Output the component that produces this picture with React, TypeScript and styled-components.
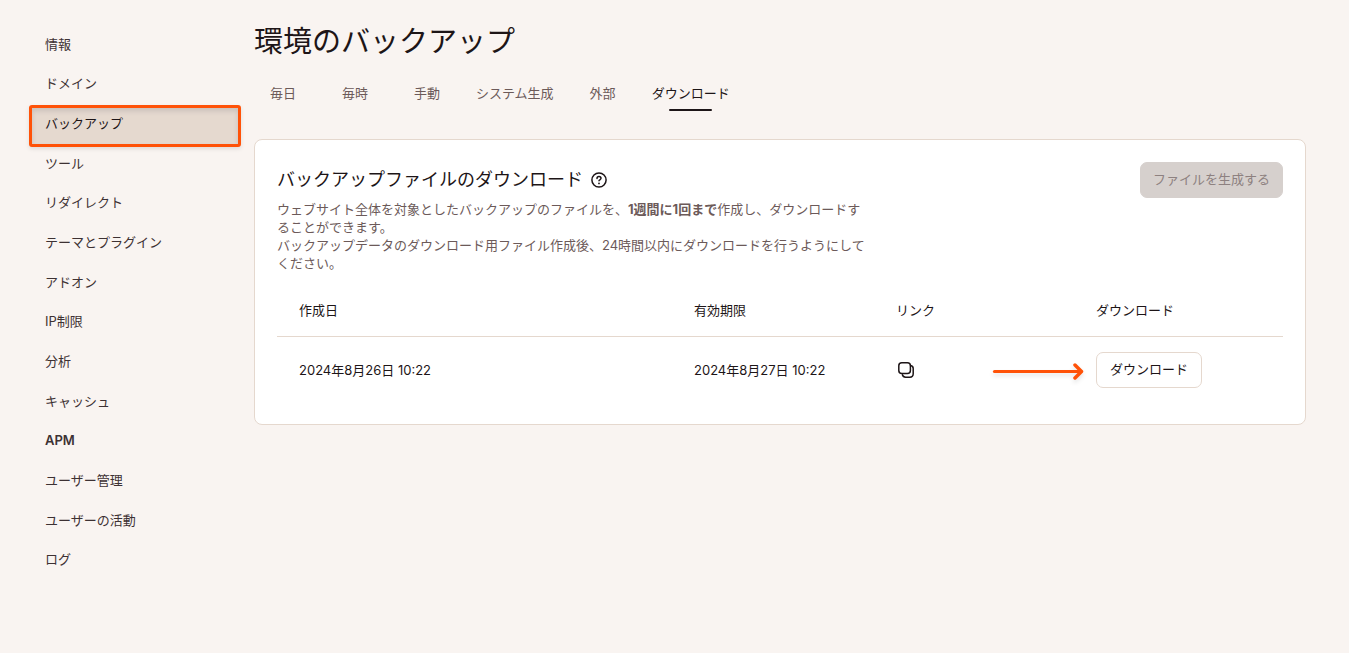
import React from "react";
import styled, { createGlobalStyle } from "styled-components";

const color = {
  page: "#f9f4f1",
  ink: "#1d1517",
  nav: "#3d3133",
  muted: "#6c5a59",
  line: "#e5d8ce",
  sand: "#e5d9cf",
  accent: "#ff5208",
  disabled: "#d6d0cd",
  disabledText: "#8d8180",
};

const GlobalStyle = createGlobalStyle`
  *, *::before, *::after { box-sizing: border-box; }
  body {
    margin: 0;
    background: ${color.page};
    color: ${color.ink};
    font-family: Inter, "Noto Sans CJK JP", sans-serif;
    font-size: 13px;
    line-height: 18px;
  }
`;

const Page = styled.div`
  display: flex;
  align-items: flex-start;
  min-height: 100vh;
`;

const Sidebar = styled.nav`
  flex: 0 0 254px;
  padding: 27px 14px 0 30px;
`;

const NavList = styled.ul`
  display: flex;
  flex-direction: column;
  min-height: 85vh;
  margin: 0;
  padding: 0;
  list-style: none;
`;

const NavItem = styled.li`
  display: flex;
  flex: 1 0 36px;
`;

const NavLink = styled.a<{ $active?: boolean; $strong?: boolean }>`
  display: flex;
  flex: 1;
  align-items: center;
  padding: 0 15px 6px;
  color: ${(p) => (p.$active ? color.ink : color.nav)};
  font-weight: ${(p) => (p.$strong ? 600 : 400)};
  text-decoration: none;
  ${(p) =>
    p.$active &&
    `
    background: ${color.sand};
    outline: 3px solid ${color.accent};
    outline-offset: -2px;
    border-radius: 2px;
    box-shadow: 0 2px 4px 1px rgba(0, 0, 0, 0.1), inset 0 3px 5px 2px rgba(60, 60, 80, 0.16);
  `}
`;

const Main = styled.main`
  flex: 1;
  min-width: 0;
  padding: 22px 43px 40px 0;
`;

const Title = styled.h1`
  margin: 0;
  font-size: 29px;
  font-weight: 400;
  line-height: 40px;
`;

const Tabs = styled.div`
  display: flex;
  gap: 14px;
  margin: 15px 0 28px;
`;

const Tab = styled.button<{ $active?: boolean }>`
  position: relative;
  min-width: 58px;
  height: 34px;
  padding: 0 6px 2px;
  border: 0;
  background: none;
  color: ${(p) => (p.$active ? color.ink : color.muted)};
  font: inherit;
  white-space: nowrap;
  cursor: pointer;

  &::after {
    content: "";
    display: ${(p) => (p.$active ? "block" : "none")};
    position: absolute;
    bottom: 0;
    left: 23px;
    right: 24px;
    height: 2px;
    border-radius: 1px;
    background: ${color.ink};
  }
`;

const Card = styled.section`
  padding: 22px 22px 20px;
  border: 1px solid ${color.line};
  border-radius: 8px;
  background: #fff;
`;

const CardHeader = styled.header`
  display: flex;
  justify-content: space-between;
  align-items: flex-start;
  gap: 24px;
`;

const Intro = styled.div`
  max-width: 592px;
`;

const HeadingRow = styled.div`
  display: flex;
  align-items: center;
  gap: 6px;
`;

const Heading = styled.h2`
  margin: 0;
  font-size: 18px;
  font-weight: 400;
  line-height: 36px;
`;

const IconButton = styled.button`
  display: flex;
  padding: 0;
  border: 0;
  background: none;
  color: ${color.ink};
  cursor: pointer;
`;

const Description = styled.p`
  margin: 2px 0 0;
  color: ${color.muted};
`;

const Button = styled.button`
  height: 36px;
  padding: 0 13px 2px;
  border: 1px solid ${color.line};
  border-radius: 7px;
  background: #fff;
  color: ${color.ink};
  font: inherit;
  white-space: nowrap;
  cursor: pointer;

  &:disabled {
    flex: none;
    padding: 0 12px 2px;
    border-color: ${color.disabled};
    background: ${color.disabled};
    color: ${color.disabledText};
    cursor: default;
  }
`;

const Table = styled.table`
  width: 100%;
  margin-top: 14px;
  border-collapse: collapse;
  table-layout: fixed;
`;

const HeadCell = styled.th<{ $width?: number }>`
  width: ${(p) => (p.$width ? `${p.$width}px` : "auto")};
  height: 50px;
  padding: 0 22px 2px;
  border-bottom: 1px solid ${color.line};
  font-weight: 400;
  text-align: left;
`;

const Cell = styled.td`
  height: 68px;
  padding: 0 22px;
  vertical-align: middle;
`;

const Action = styled.div`
  position: relative;
  display: flex;
`;

const Pointer = styled.svg`
  position: absolute;
  top: 8px;
  right: 100%;
  margin-right: 10px;
  overflow: visible;
  filter: drop-shadow(0 3px 2px rgba(0, 0, 0, 0.1));
  pointer-events: none;
`;

const HelpIcon = () => (
  <svg width="20" height="20" viewBox="0 0 20 20" fill="none" stroke="currentColor" strokeWidth="1.5" strokeLinecap="round">
    <circle cx="10" cy="10" r="7.1" />
    <path d="M8 8.4c0-1.2.9-1.9 2-1.9s2 .8 2 1.8c0 1.4-2 1.5-2 2.5" />
    <circle cx="10" cy="13.4" r="0.9" fill="currentColor" stroke="none" />
  </svg>
);

const CopyIcon = () => (
  <svg width="20" height="20" viewBox="0 0 20 20" fill="none" stroke="currentColor" strokeWidth="1.5" strokeLinecap="round" strokeLinejoin="round">
    <rect x="2.8" y="2.8" width="11.6" height="10.8" rx="3" />
    <path d="M14.6 5.6c1.7.3 2.6 1.3 2.6 3v5.2c0 2.200-1.200 3.400-3.400 3.400H9.600c-1.600 0-2.800-.8-3.200-2.400" />
  </svg>
);

const PointerArrow = () => (
  <Pointer width="93" height="22" viewBox="0 0 93 22" fill="none" stroke={color.accent} strokeLinecap="round" strokeLinejoin="round" aria-hidden="true">
    <path d="M1.500 11.500H88" strokeWidth="3.200" />
    <path d="M82 5L88.500 11.500L82 18" strokeWidth="3.500" />
  </Pointer>
);

const navItems = [
  { label: "情報" },
  { label: "ドメイン" },
  { label: "バックアップ", active: true },
  { label: "ツール" },
  { label: "リダイレクト" },
  { label: "テーマとプラグイン" },
  { label: "アドオン" },
  { label: "IP制限" },
  { label: "分析" },
  { label: "キャッシュ" },
  { label: "APM", strong: true },
  { label: "ユーザー管理" },
  { label: "ユーザーの活動" },
  { label: "ログ" },
];

const tabs = ["毎日", "毎時", "手動", "システム生成", "外部", "ダウンロード"];

export default function App() {
  return (
    <>
      <GlobalStyle />
      <Page lang="ja">
        <Sidebar>
          <NavList>
            {navItems.map((item) => (
              <NavItem key={item.label}>
                <NavLink href="#" $active={item.active} $strong={item.strong} aria-current={item.active ? "page" : undefined}>
                  {item.label}
                </NavLink>
              </NavItem>
            ))}
          </NavList>
        </Sidebar>
        <Main>
          <Title>環境のバックアップ</Title>
          <Tabs role="tablist">
            {tabs.map((label) => (
              <Tab key={label} role="tab" aria-selected={label === "ダウンロード"} $active={label === "ダウンロード"}>
                {label}
              </Tab>
            ))}
          </Tabs>
          <Card>
            <CardHeader>
              <Intro>
                <HeadingRow>
                  <Heading>バックアップファイルのダウンロード</Heading>
                  <IconButton aria-label="ヘルプ">
                    <HelpIcon />
                  </IconButton>
                </HeadingRow>
                <Description>
                  ウェブサイト全体を対象としたバックアップのファイルを、<b>1週間に1回まで</b>作成し、ダウンロードすることができます。
                  <br />
                  バックアップデータのダウンロード用ファイル作成後、24時間以内にダウンロードを行うようにしてください。
                </Description>
              </Intro>
              <Button disabled>ファイルを生成する</Button>
            </CardHeader>
            <Table>
              <thead>
                <tr>
                  <HeadCell>作成日</HeadCell>
                  <HeadCell $width={202}>有効期限</HeadCell>
                  <HeadCell $width={200}>リンク</HeadCell>
                  <HeadCell $width={209}>ダウンロード</HeadCell>
                </tr>
              </thead>
              <tbody>
                <tr>
                  <Cell>2024年8月26日 10:22</Cell>
                  <Cell>2024年8月27日 10:22</Cell>
                  <Cell>
                    <IconButton aria-label="リンクをコピー">
                      <CopyIcon />
                    </IconButton>
                  </Cell>
                  <Cell>
                    <Action>
                      <PointerArrow />
                      <Button>ダウンロード</Button>
                    </Action>
                  </Cell>
                </tr>
              </tbody>
            </Table>
          </Card>
        </Main>
      </Page>
    </>
  );
}
